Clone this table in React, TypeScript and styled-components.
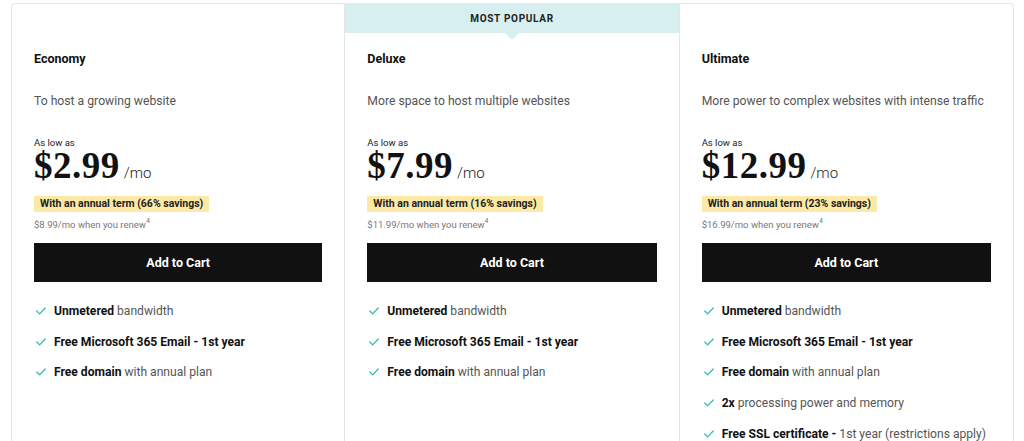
import React from "react";
import styled, { createGlobalStyle } from "styled-components";

const GlobalStyle = createGlobalStyle`
  html, body { margin: 0; padding: 0; background: #ffffff; }
  body { font-family: Roboto, "Liberation Sans", Arial, sans-serif; color: #111111; overflow: hidden; }
  * { box-sizing: border-box; }
`;

const Page = styled.div`
  padding: 3px 10px 0 11px;
`;

const Grid = styled.div`
  display: grid;
  grid-template-columns: repeat(3, 1fr);
`;

const Card = styled.div<{ $first?: boolean; $last?: boolean }>`
  border: 1px solid #e3e6e6;
  border-left: ${(p) => (p.$first ? "1px solid #e3e6e6" : "none")};
  border-radius: ${(p) => (p.$first ? "4px 0 0 0" : p.$last ? "0 4px 0 0" : "0")};
  min-height: 460px;
  background: #fff;
`;

const Banner = styled.div<{ $show?: boolean }>`
  position: relative;
  height: 30px;
  margin-top: -1px;
  background: ${(p) => (p.$show ? "#d7efef" : "transparent")};
  display: flex;
  align-items: center;
  justify-content: center;
  font-size: 10px;
  font-weight: 700;
  letter-spacing: 0.7px;
  color: #222;
  &::after {
    content: "";
    display: ${(p) => (p.$show ? "block" : "none")};
    position: absolute;
    left: 50%;
    bottom: -7px;
    margin-left: -7px;
    border-left: 7px solid transparent;
    border-right: 7px solid transparent;
    border-top: 7px solid #d7efef;
  }
`;

const Body = styled.div`
  padding: 0 22px 0 22px;
  display: flex;
  flex-direction: column;
`;

const Title = styled.div`
  margin-top: 17px;
  font-size: 12.5px;
  font-weight: 700;
  line-height: 18px;
  color: #111;
`;

const Desc = styled.div`
  margin-top: 24px;
  font-size: 12.2px;
  line-height: 18px;
  color: #555;
  white-space: nowrap;
`;

const AsLow = styled.div`
  margin-top: 27px;
  font-size: 9.5px;
  line-height: 11px;
  color: #222;
`;

const PriceRow = styled.div`
  display: flex;
  align-items: baseline;
  gap: 4px;
  height: 36px;
`;

const Price = styled.span`
  font-family: "Liberation Serif", "Times New Roman", serif;
  font-weight: 700;
  font-size: 37px;
  line-height: 36px;
  letter-spacing: 0.5px;
  color: #111;
`;

const Per = styled.span`
  font-size: 15px;
  font-weight: 300;
  color: #222;
`;

const Badge = styled.div`
  align-self: flex-start;
  margin-top: 12px;
  background: #fde9a6;
  padding: 0 6px;
  height: 16px;
  line-height: 16px;
  font-size: 10.5px;
  font-weight: 700;
  color: #222;
`;

const Renew = styled.div`
  margin-top: 6px;
  font-size: 9.5px;
  line-height: 14px;
  color: #777;
  sup {
    font-size: 7px;
    vertical-align: 5px;
    line-height: 0;
  }
`;

const CartButton = styled.button`
  margin-top: 11px;
  height: 39px;
  width: 100%;
  border: none;
  background: #111111;
  color: #fff;
  font-family: Roboto, "Liberation Sans", Arial, sans-serif;
  font-size: 12.5px;
  font-weight: 700;
  cursor: pointer;
`;

const Features = styled.ul`
  list-style: none;
  margin: 20px 0 0 0;
  padding: 0;
  display: flex;
  flex-direction: column;
  gap: 12.7px;
`;

const Feature = styled.li`
  display: flex;
  align-items: center;
  gap: 8px;
  font-size: 12.1px;
  line-height: 18px;
  color: #555;
  white-space: nowrap;
  b {
    color: #111;
    font-weight: 700;
  }
`;

const Check = () => (
  <svg width="10" height="8" viewBox="0 0 10 8" fill="none" style={{ flexShrink: 0, marginLeft: 2 }}>
    <polyline points="0.8,4 3.6,6.8 9.2,1" stroke="#2cb8b4" strokeWidth="1.2" strokeLinecap="round" strokeLinejoin="round" />
  </svg>
);

type Plan = {
  name: string;
  desc: string;
  price: string;
  savings: string;
  renew: string;
  popular?: boolean;
  features: React.ReactNode[];
};

const base: React.ReactNode[] = [
  <><b>Unmetered</b> bandwidth</>,
  <><b>Free Microsoft 365 Email - 1st year</b></>,
  <><b>Free domain</b> with annual plan</>,
];

const plans: Plan[] = [
  {
    name: "Economy",
    desc: "To host a growing website",
    price: "$2.99",
    savings: "With an annual term (66% savings)",
    renew: "$8.99/mo when you renew",
    features: base,
  },
  {
    name: "Deluxe",
    desc: "More space to host multiple websites",
    price: "$7.99",
    savings: "With an annual term (16% savings)",
    renew: "$11.99/mo when you renew",
    popular: true,
    features: base,
  },
  {
    name: "Ultimate",
    desc: "More power to complex websites with intense traffic",
    price: "$12.99",
    savings: "With an annual term (23% savings)",
    renew: "$16.99/mo when you renew",
    features: [
      ...base,
      <><b>2x</b> processing power and memory</>,
      <><b>Free SSL certificate -</b> 1st year (restrictions apply)</>,
    ],
  },
];

export default function App() {
  return (
    <>
      <GlobalStyle />
      <Page>
        <Grid>
          {plans.map((p, i) => (
            <Card key={p.name} $first={i === 0} $last={i === plans.length - 1}>
              <Banner $show={p.popular}>{p.popular ? "MOST POPULAR" : ""}</Banner>
              <Body>
                <Title>{p.name}</Title>
                <Desc>{p.desc}</Desc>
                <AsLow>As low as</AsLow>
                <PriceRow>
                  <Price>{p.price}</Price>
                  <Per>/mo</Per>
                </PriceRow>
                <Badge>{p.savings}</Badge>
                <Renew>
                  {p.renew}
                  <sup>4</sup>
                </Renew>
                <CartButton>Add to Cart</CartButton>
                <Features>
                  {p.features.map((f, j) => (
                    <Feature key={j}>
                      <Check />
                      <span>{f}</span>
                    </Feature>
                  ))}
                </Features>
              </Body>
            </Card>
          ))}
        </Grid>
      </Page>
    </>
  );
}
